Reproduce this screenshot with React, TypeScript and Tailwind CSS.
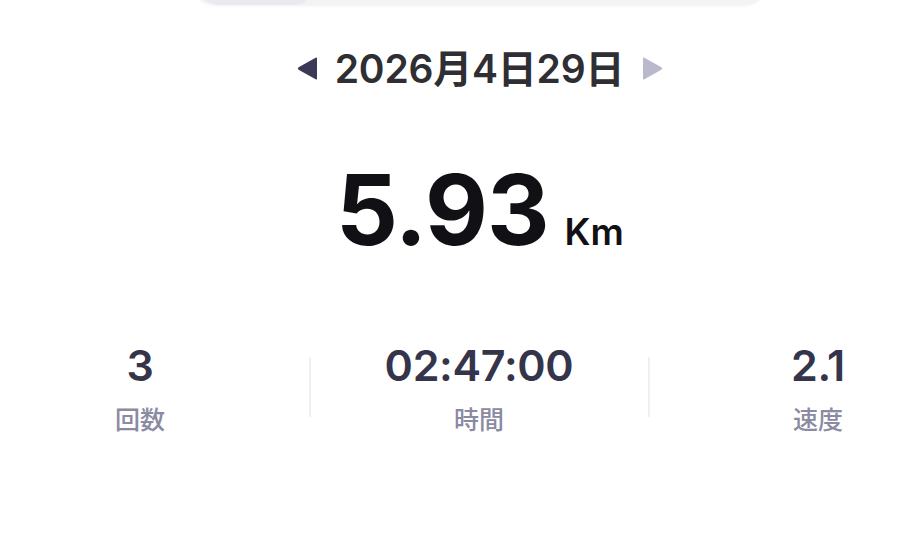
import React from "react";

const sans = "font-['Inter','Noto_Sans_CJK_JP',sans-serif]";

function Stat({ value, label }: { value: string; label: string }) {
  return (
    <div className="flex w-[337px] shrink-0 flex-col items-center">
      <div className="text-[43px] font-semibold leading-none tracking-[-0.3px] text-[#34344a]">{value}</div>
      <div className="mt-[21px] text-[25px] font-medium leading-none text-[#8a8aa2]">{label}</div>
    </div>
  );
}

export default function App() {
  return (
    <div className={`relative h-[543px] w-[903px] overflow-hidden bg-white ${sans}`}>
      <div className="flex w-[960px] flex-col items-center">
        {/* top card edge */}
        <div className="mt-[-55px] flex h-[60px] w-[578px] items-end overflow-hidden rounded-[26px] bg-[#f3f3f6] shadow-[0_1px_3px_rgba(0,0,0,0.06)]">
          <div className="ml-[6px] h-[62px] w-[118px] rounded-[22px] bg-[#e9e9ee]" />
        </div>

        {/* date row */}
        <div className="mt-[44px] flex items-center">
          <svg width="21" height="23" viewBox="0 0 21 23" className="mr-[17px]">
            <path d="M20 1.5 L20 21.5 Q20 23 18.6 22.2 L1.6 12.7 Q0 11.5 1.6 10.3 L18.6 0.8 Q20 0 20 1.5 Z" fill="#3a3a56" />
          </svg>
          <div className="text-[39px] font-semibold leading-none tracking-[-0.2px] text-[#2e2e33]">2026月4日29日</div>
          <svg width="21" height="23" viewBox="0 0 21 23" className="ml-[18px]">
            <path d="M1 1.5 L1 21.5 Q1 23 2.4 22.2 L19.4 12.7 Q21 11.5 19.4 10.3 L2.4 0.8 Q1 0 1 1.5 Z" fill="#b9b9cd" />
          </svg>
        </div>

        {/* distance */}
        <div className="mt-[73px] flex items-baseline">
          <span className="text-[97px] font-bold leading-none tracking-[-1px] text-[#111115]">5.93</span>
          <span className="ml-[16px] text-[37px] font-semibold leading-none text-[#111115]">Km</span>
        </div>

        {/* stats */}
        <div className="mt-[86px] flex w-[1017px] shrink-0">
          <Stat value="3" label="回数" />
          <div className="mt-[13px] h-[60px] w-[2px] shrink-0 bg-[#f0f0f2]" />
          <Stat value="02:47:00" label="時間" />
          <div className="mt-[13px] h-[60px] w-[2px] shrink-0 bg-[#f0f0f2]" />
          <Stat value="2.1" label="速度" />
        </div>
      </div>
    </div>
  );
}
